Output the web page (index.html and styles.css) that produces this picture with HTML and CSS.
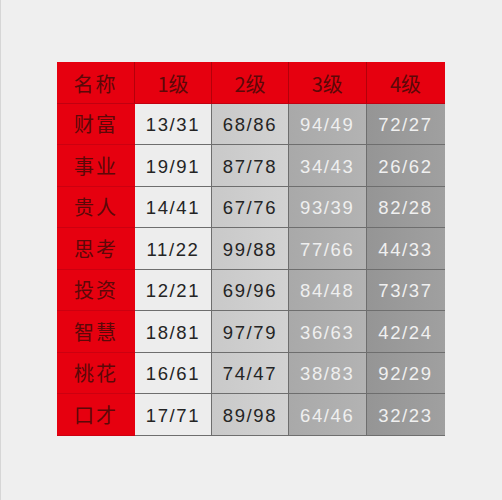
FILE: index.html
```html
<!DOCTYPE html>
<html lang="zh">
<head>
<meta charset="utf-8">
<link rel="stylesheet" href="styles.css">
</head>
<body>
<div class="page">
  <div class="grid">
    <div class="cell hd first">名称</div>
    <div class="cell hd">1级</div>
    <div class="cell hd">2级</div>
    <div class="cell hd">3级</div>
    <div class="cell hd last">4级</div>

    <div class="cell name">财富</div><div class="cell c1">13/31</div><div class="cell c2">68/86</div><div class="cell c3">94/49</div><div class="cell c4">72/27</div>
    <div class="cell name">事业</div><div class="cell c1">19/91</div><div class="cell c2">87/78</div><div class="cell c3">34/43</div><div class="cell c4">26/62</div>
    <div class="cell name">贵人</div><div class="cell c1">14/41</div><div class="cell c2">67/76</div><div class="cell c3">93/39</div><div class="cell c4">82/28</div>
    <div class="cell name">思考</div><div class="cell c1">11/22</div><div class="cell c2">99/88</div><div class="cell c3">77/66</div><div class="cell c4">44/33</div>
    <div class="cell name">投资</div><div class="cell c1">12/21</div><div class="cell c2">69/96</div><div class="cell c3">84/48</div><div class="cell c4">73/37</div>
    <div class="cell name">智慧</div><div class="cell c1">18/81</div><div class="cell c2">97/79</div><div class="cell c3">36/63</div><div class="cell c4">42/24</div>
    <div class="cell name">桃花</div><div class="cell c1">16/61</div><div class="cell c2">74/47</div><div class="cell c3">38/83</div><div class="cell c4">92/29</div>
    <div class="cell name">口才</div><div class="cell c1">17/71</div><div class="cell c2">89/98</div><div class="cell c3">64/46</div><div class="cell c4">32/23</div>
  </div>
</div>
</body>
</html>
```

FILE: styles.css
```css
html, body {
  margin: 0;
  padding: 0;
}
body {
  background: #efefef;
  width: 502px;
  height: 500px;
  overflow: hidden;
  border-left: 1px solid #d6d6d6;
  box-sizing: border-box;
}
.page {
  padding-top: 62px;
  padding-left: 56px;
}
.grid {
  display: grid;
  grid-template-columns: 78px 77px 77px 77.5px 78px;
  grid-template-rows: repeat(9, 41.5px);
  width: 387.5px;
}
.cell {
  box-sizing: border-box;
  display: flex;
  align-items: center;
  justify-content: center;
  padding-top: 3px;
  font-family: "Liberation Sans", "Noto Sans CJK SC", sans-serif;
  font-size: 18.5px;
  letter-spacing: 1.6px;
  color: #242424;
  border-right: 1px solid #6e6e6e;
  border-bottom: 1px solid #6e6e6e;
}
.hd {
  background: #e6000f;
  color: #5c0808;
  font-family: "Noto Sans CJK SC", "Liberation Sans", sans-serif;
  font-size: 20px;
  letter-spacing: 0;
  border-right: 1px solid #b4000a;
  border-bottom: 1px solid #c00010;
  padding-top: 2px;
}
.hd.first {
  letter-spacing: 2px;
}
.hd.last {
  border-right: none;
}
.name {
  background: #e6000f;
  color: #5c0808;
  font-family: "Noto Sans CJK SC", sans-serif;
  font-size: 20px;
  letter-spacing: 2px;
  border-right: none;
  border-bottom: 1px solid #cc0010;
  padding-top: 0;
}
.c1 {
  background: #ededed;
}
.c2 {
  background: linear-gradient(to right, #c9c9c9, #d2d2d2);
}
.c3 {
  background: linear-gradient(to right, #a9a9a9, #b3b3b3);
  color: #efefef;
}
.c4 {
  background: linear-gradient(to right, #959595, #a0a0a0);
  color: #f0f0f0;
  border-right: none;
}
```
